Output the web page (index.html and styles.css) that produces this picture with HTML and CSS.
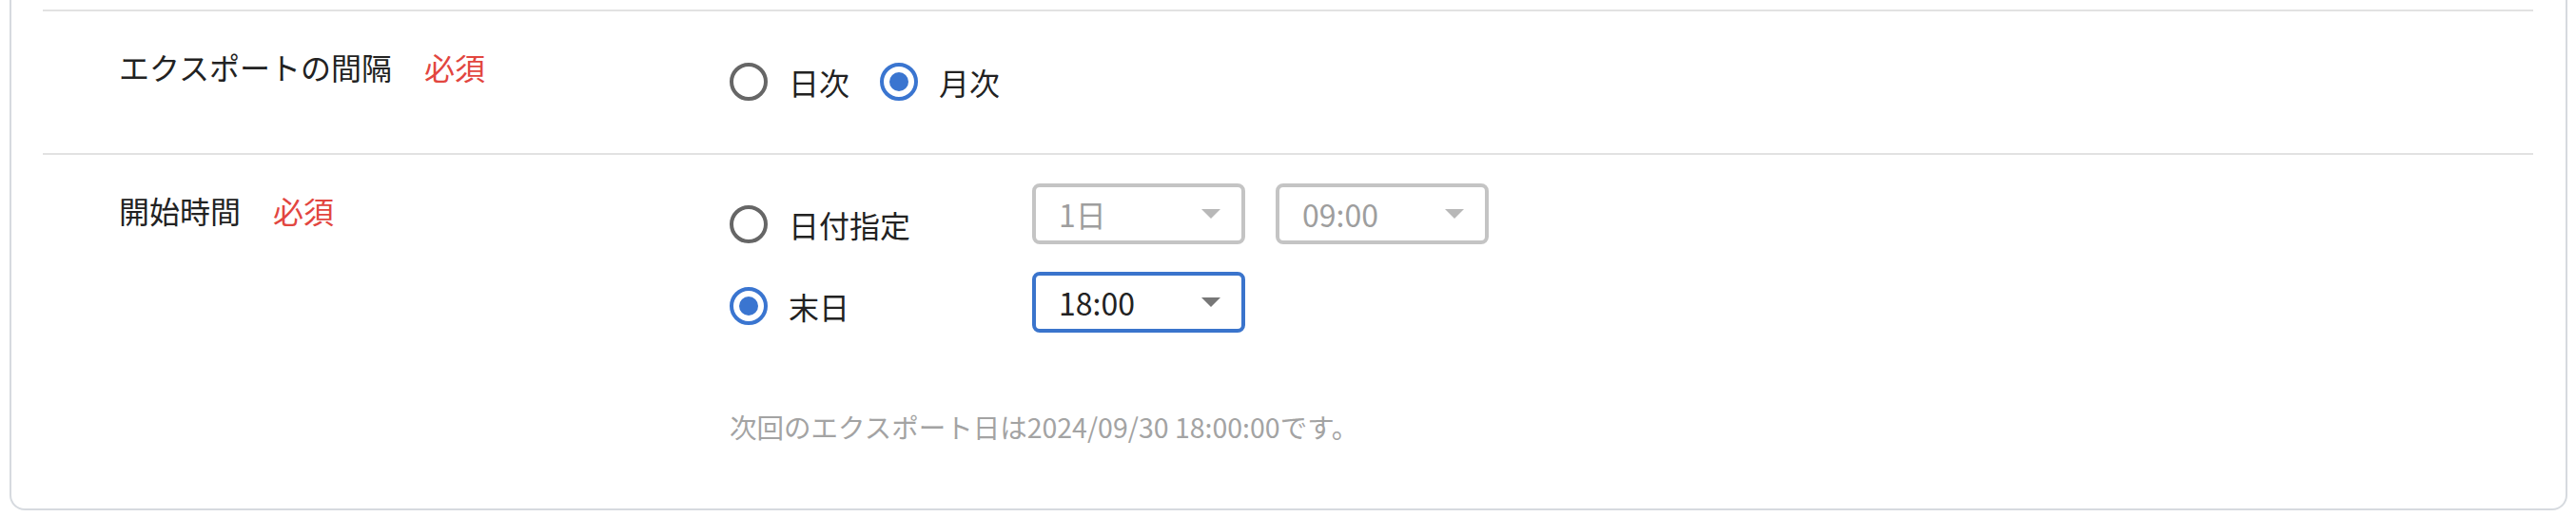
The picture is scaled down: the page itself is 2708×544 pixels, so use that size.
FILE: index.html
```html
<!DOCTYPE html>
<html lang="ja">
<head>
<meta charset="utf-8">
<link rel="stylesheet" href="styles.css">
</head>
<body>
<div class="card">
  <div class="section sec1">
    <div class="label">エクスポートの間隔<span class="req">必須</span></div>
    <div class="field">
      <div class="radios">
        <label class="radio"><span class="circle"></span><span class="rtext">日次</span></label>
        <label class="radio checked"><span class="circle"></span><span class="rtext">月次</span></label>
      </div>
    </div>
  </div>
  <div class="section sec2">
    <div class="label">開始時間<span class="req">必須</span></div>
    <div class="field">
      <div class="opt-row r1">
        <label class="radio"><span class="circle"></span><span class="rtext">日付指定</span></label>
        <div class="select disabled"><span class="val">1日</span><span class="arrow"></span></div>
        <div class="select disabled"><span class="val">09:00</span><span class="arrow"></span></div>
      </div>
      <div class="opt-row r2">
        <label class="radio checked"><span class="circle"></span><span class="rtext">末日</span></label>
        <div class="select active"><span class="val">18:00</span><span class="arrow"></span></div>
      </div>
      <p class="help">次回のエクスポート日は2024/09/30 18:00:00です。</p>
    </div>
  </div>
</div>
</body>
</html>
```
FILE: styles.css
```css
* { box-sizing: border-box; }
html, body { margin: 0; padding: 0; background: #ffffff; }
body {
  font-family: "Noto Sans CJK JP", "Noto Sans", sans-serif;
  color: #222222;
  font-size: 32px;
  width: 2708px;
  height: 544px;
  overflow: hidden;
}
.card {
  margin: 0 9px 0 10px;
  padding: 10px 34px 0 33px;
  border: 2px solid #d6dadf;
  border-top: none;
  border-radius: 0 0 16px 16px;
  background: #ffffff;
}
.section {
  display: grid;
  grid-template-columns: 722px 1fr;
  border-top: 2px solid #e2e2e2;
}
.sec1 { padding-bottom: 51px; }
.sec2 { padding-bottom: 65px; }
.label {
  padding: 34px 0 0 80px;
  line-height: 48px;
  white-space: nowrap;
}
.req {
  color: #e2463f;
  margin-left: 34px;
}
.sec1 .field { padding-top: 50px; }
.sec2 .field { padding-top: 30px; }
.radios {
  display: flex;
  gap: 32px;
}
.radio {
  display: flex;
  align-items: center;
  gap: 22px;
  height: 48px;
  line-height: 48px;
}
.circle {
  width: 40px;
  height: 40px;
  border-radius: 50%;
  border: 4px solid #666666;
  flex: none;
  display: flex;
  align-items: center;
  justify-content: center;
}
.radio.checked .circle { border-color: #3a75d0; }
.radio.checked .circle::after {
  content: "";
  width: 20px;
  height: 20px;
  border-radius: 50%;
  background: #3a75d0;
}
.opt-row {
  display: grid;
  grid-template-columns: 286px 224px 224px;
  column-gap: 32px;
  align-items: start;
}
.opt-row.r2 { margin-top: 26px; }
.opt-row.r1 .radio { margin-top: 19px; }
.opt-row.r2 .radio { margin-top: 12px; }
.select {
  height: 64px;
  border: 4px solid #c4c4c4;
  border-radius: 8px;
  display: flex;
  align-items: center;
  justify-content: space-between;
  padding: 0 22px 0 24px;
  line-height: 48px;
}
.select.disabled { color: #9e9e9e; }
.select.disabled .arrow { border-top-color: #b8b8b8; }
.select.active { border-color: #3a74cc; color: #222222; }
.arrow {
  width: 0;
  height: 0;
  border-left: 10px solid transparent;
  border-right: 10px solid transparent;
  border-top: 10px solid #777777;
}
.help {
  margin: 78px 0 0;
  font-size: 28.5px;
  line-height: 42px;
  color: #a3a3a3;
}
```
